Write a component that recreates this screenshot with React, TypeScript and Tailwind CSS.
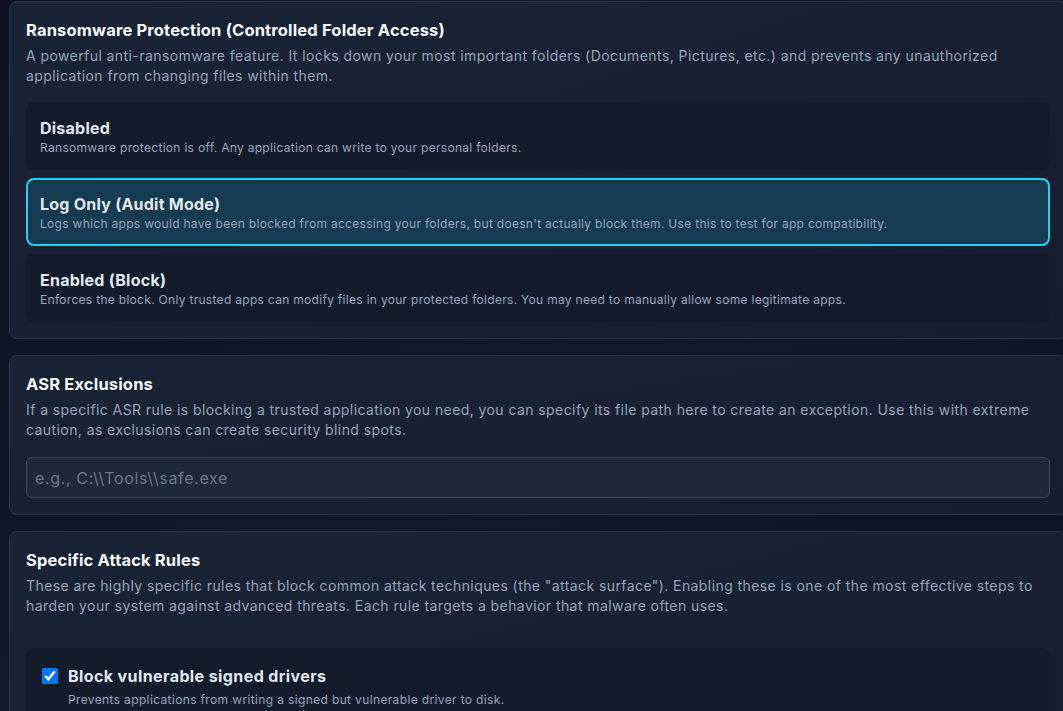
import React from "react";

const options = [
  {
    title: "Disabled",
    desc: "Ransomware protection is off. Any application can write to your personal folders.",
    selected: false,
  },
  {
    title: "Log Only (Audit Mode)",
    desc: "Logs which apps would have been blocked from accessing your folders, but doesn't actually block them. Use this to test for app compatibility.",
    selected: true,
  },
  {
    title: "Enabled (Block)",
    desc: "Enforces the block. Only trusted apps can modify files in your protected folders. You may need to manually allow some legitimate apps.",
    selected: false,
  },
];

const rules = [
  {
    title: "Block vulnerable signed drivers",
    desc: "Prevents applications from writing a signed but vulnerable driver to disk.",
    checked: true,
  },
  {
    title: "Block executable content from email client and webmail",
    desc: "Prevents executable files from being launched from email.",
    checked: true,
  },
];

function Card({ children }: { children: React.ReactNode }) {
  return (
    <section className="rounded-lg border border-[#2a3547] bg-gradient-to-br from-[#1a2334] to-[#161e2e] p-4">
      {children}
    </section>
  );
}

export default function App() {
  return (
    <div
      className="min-h-screen w-[1063px] overflow-hidden bg-gradient-to-br from-[#0d1322] via-[#111a2b] to-[#0c1222] pt-px text-[#f1f5f9]"
      style={{ fontFamily: "Inter, 'Open Sans', sans-serif" }}
    >
      <div className="ml-[9px] flex w-[1058px] flex-col gap-4">
        <Card>
          <h2 className="text-[16.5px] font-bold leading-6 tracking-[0.01em] text-[#f8fafc]">
            Ransomware Protection (Controlled Folder Access)
          </h2>
          <p className="mt-1 text-sm leading-5 tracking-[0.03em] text-[#94a3b8]">
            A powerful anti-ransomware feature. It locks down your most important folders (Documents, Pictures, etc.) and prevents any unauthorized application from changing files within them.
          </p>
          <div className="mt-4 flex flex-col gap-2">
            {options.map((o) => (
              <div
                key={o.title}
                className={
                  o.selected
                    ? "rounded-lg border-2 border-[#22d3ee] bg-[#143b51] p-3"
                    : "rounded-lg border-2 border-transparent bg-[#141c2c] p-3"
                }
              >
                <div className="text-base font-bold leading-6 tracking-[0.015em] text-[#e2e8f0]">{o.title}</div>
                <div className="text-xs leading-4 tracking-[0.025em] text-[#94a3b8]">{o.desc}</div>
              </div>
            ))}
          </div>
        </Card>

        <Card>
          <h2 className="text-[16.5px] font-bold leading-6 tracking-[0.01em] text-[#f8fafc]">ASR Exclusions</h2>
          <p className="mt-1 text-sm leading-5 tracking-[0.03em] text-[#94a3b8]">
            If a specific ASR rule is blocking a trusted application you need, you can specify its file path here to create an exception. Use this with extreme caution, as exclusions can create security blind spots.
          </p>
          <input
            type="text"
            placeholder="e.g., C:\\Tools\\safe.exe"
            className="mt-[17px] block h-[41px] w-full rounded-md border border-[#3a4659] bg-[#1e2839] px-2 text-base tracking-[0.04em] text-[#e2e8f0] placeholder:text-[#6b7585] outline-none"
          />
        </Card>

        <Card>
          <h2 className="text-[16.5px] font-bold leading-6 tracking-[0.01em] text-[#f8fafc]">Specific Attack Rules</h2>
          <p className="mt-1 text-sm leading-5 tracking-[0.03em] text-[#94a3b8]">
            These are highly specific rules that block common attack techniques (the "attack surface"). Enabling these is one of the most effective steps to harden your system against advanced threats. Each rule targets a behavior that malware often uses.
          </p>
          <div className="mt-8 flex flex-col gap-2">
            {rules.map((r) => (
              <div key={r.title} className="flex items-start gap-2.5 rounded-lg bg-[#141c2c] p-4">
                <input
                  type="checkbox"
                  defaultChecked={r.checked}
                  className="mt-1 h-4 w-4 shrink-0 accent-[#0075ff]"
                />
                <div>
                  <div className="text-base font-bold leading-6 tracking-[0.025em] text-[#e2e8f0]">{r.title}</div>
                  <div className="mt-1 text-xs leading-4 tracking-[0.03em] text-[#94a3b8]">{r.desc}</div>
                </div>
              </div>
            ))}
          </div>
        </Card>
      </div>
    </div>
  );
}
